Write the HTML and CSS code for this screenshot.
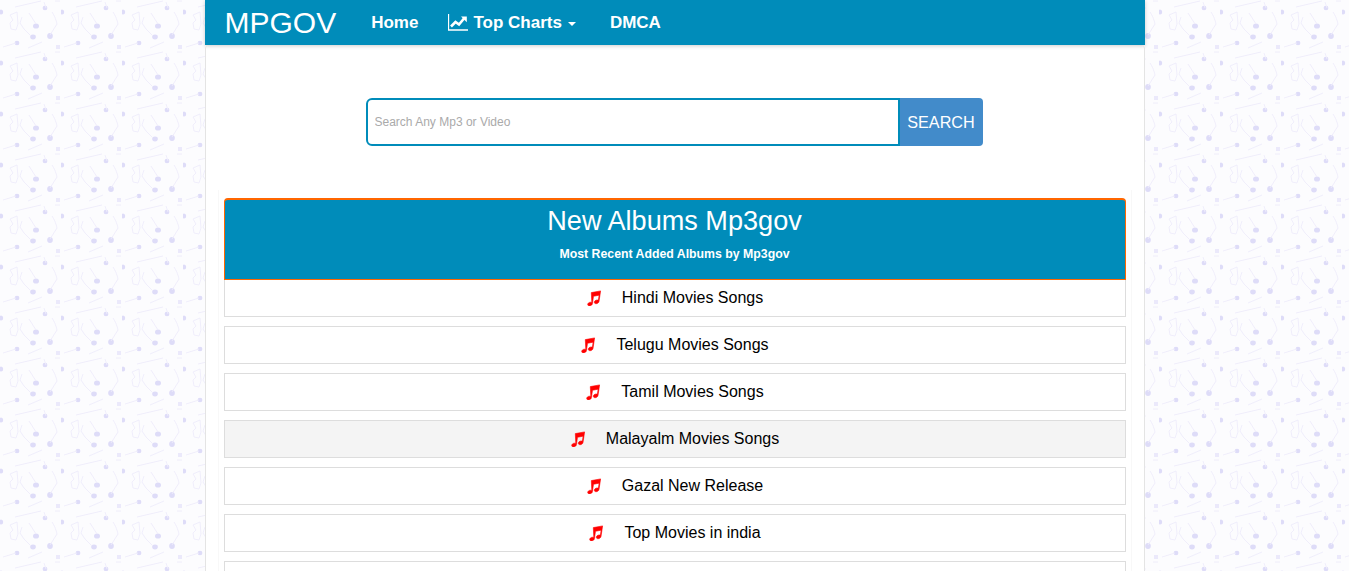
FILE: index.html
```html
<!DOCTYPE html>
<html lang="en">
<head>
    <meta charset="UTF-8">
    <meta name="viewport" content="width=device-width, initial-scale=1.0">
    <title>MPGOV</title>
    <link rel="stylesheet" href="styles.css">
</head>
<body>
    <div class="container">
        <div class="navbar">
            <a class="brand">MPGOV</a>
            <a class="nav-link nav-home">Home</a>
            <a class="nav-link nav-charts">
                <svg class="chart-icon" viewBox="0 0 20 17" width="20" height="17">
                    <path d="M0.5 0v16H20" fill="none" stroke="#fff" stroke-width="1.3"/>
                    <path d="M3 12.5l4.5-4.5 3.5 2.5 5-6" fill="none" stroke="#fff" stroke-width="2.6"/>
                    <path d="M13 2.4h5.8v5.8z" fill="#fff"/>
                </svg>
                Top Charts
                <span class="caret"></span>
            </a>
            <a class="nav-link nav-dmca">DMCA</a>
        </div>

        <div class="content">
            <form class="search-form">
                <input class="search-input" type="text" placeholder="Search Any Mp3 or Video">
                <button class="search-btn" type="button">SEARCH</button>
            </form>

            <div class="section">
                <div class="section-head">
                    <h2>New Albums Mp3gov</h2>
                    <p>Most Recent Added Albums by Mp3gov</p>
                </div>
                <ul class="album-list">
                    <li class="album"><svg class="note"><use href="#music"/></svg>Hindi Movies Songs</li>
                    <li class="album"><svg class="note"><use href="#music"/></svg>Telugu Movies Songs</li>
                    <li class="album"><svg class="note"><use href="#music"/></svg>Tamil Movies Songs</li>
                    <li class="album album-hover"><svg class="note"><use href="#music"/></svg>Malayalm Movies Songs</li>
                    <li class="album"><svg class="note"><use href="#music"/></svg>Gazal New Release</li>
                    <li class="album"><svg class="note"><use href="#music"/></svg>Top Movies in india</li>
                    <li class="album"></li>
                </ul>
            </div>
        </div>
    </div>

    <svg class="defs" width="0" height="0">
        <symbol id="music" viewBox="1 0 14.6 16">
            <path fill="#f00" stroke="#f00" stroke-width="0.6" d="M5.6 2.6L14.9.9l-1.6 10.6c-.2 1.3-1.6 2.2-2.9 2.2-1.1 0-1.9-.6-1.8-1.6.2-1.2 1.5-2.1 2.8-2.1.5 0 1 .1 1.3.3l.7-5.1-5.6 1.1-1.1 7.4c-.2 1.3-1.6 2.2-2.9 2.2-1.1 0-1.9-.6-1.8-1.6.2-1.2 1.5-2.1 2.8-2.1.5 0 1 .1 1.3.3z"/>
        </symbol>
    </svg>
</body>
</html>
```

FILE: styles.css
```css
* {
    margin: 0;
    padding: 0;
    box-sizing: border-box;
}

body {
    font-family: "Liberation Sans", Arial, sans-serif;
    background-color: #fcfcfe;
    background-image: url("data:image/svg+xml,%3Csvg xmlns='http://www.w3.org/2000/svg' width='61' height='51'%3E%3Cdefs%3E%3Cfilter id='b'%3E%3CfeGaussianBlur stdDeviation='0.6'/%3E%3C/filter%3E%3C/defs%3E%3Cg filter='url(%23b)'%3E%3Cg fill='%23dedcf8'%3E%3Cellipse cx='45' cy='8' rx='2.4' ry='2.2'/%3E%3Cellipse cx='1' cy='12' rx='2.2' ry='2.6'/%3E%3Cellipse cx='36' cy='26' rx='3' ry='2.6'/%3E%3Cellipse cx='33' cy='37' rx='2.8' ry='2.4'/%3E%3Cellipse cx='50' cy='36' rx='2.8' ry='3'/%3E%3Cellipse cx='17' cy='43' rx='2.4' ry='2.2'/%3E%3Crect x='56' y='45' width='4' height='4' fill='%23ebe9fb'/%3E%3C/g%3E%3Cg fill='none' stroke='%23eeecfb' stroke-width='0.9'%3E%3Cpath d='M10 15l7-3 1 12-2 6-5-1-1-6 3-3zM22 17l-2 6 4 6 7 7M36 24l-7-11M15 7l26-6M44 2l2 6M55 1h5M57 24l-7 11M52 12c4 6 5 12 5 12M3 47l13-4M28 48l14-6'/%3E%3C/g%3E%3C/g%3E%3C/svg%3E");
}

.container {
    width: 940px;
    min-height: 571px;
    margin: 0 auto;
    background: #fff;
}

.navbar {
    display: flex;
    align-items: center;
    height: 45px;
    background: #008cba;
    box-shadow: 0 1px 4px rgba(0,0,0,0.2);
    color: #fff;
}

.brand {
    font-size: 30px;
    margin-left: 20px;
}

.nav-link {
    display: flex;
    align-items: center;
    font-size: 17px;
    font-weight: bold;
}

.nav-home {
    margin-left: 35px;
}

.nav-charts {
    margin-left: 30px;
}

.chart-icon {
    margin-right: 5px;
}

.caret {
    width: 0;
    height: 0;
    margin-left: 6px;
    margin-top: 2px;
    border-top: 4px solid #fff;
    border-left: 4px solid transparent;
    border-right: 4px solid transparent;
}

.nav-dmca {
    margin-left: 34px;
}

.content {
    height: 526px;
    border-left: 1px solid #e4e4e4;
    border-right: 1px solid #e4e4e4;
    border-top-left-radius: 4px;
    border-top-right-radius: 4px;
    padding: 0 12px;
    overflow: hidden;
}

.search-form {
    display: flex;
    width: 617px;
    height: 48px;
    margin: 53px 0 44px 148px;
}

.search-input {
    flex: 1;
    border: 2px solid #008cba;
    border-radius: 6px 0 0 6px;
    padding: 0 7px;
    font-family: inherit;
    font-size: 12px;
    outline: none;
}

.search-input::placeholder {
    color: #aaa;
}

.search-btn {
    width: 83px;
    border: none;
    border-radius: 0 4px 4px 0;
    background: #428bca;
    color: #fff;
    font-family: inherit;
    font-size: 16.2px;
}

.section {
    padding: 8px 5px 0;
    border-left: 1px solid #f8f8f8;
    border-right: 1px solid #f8f8f8;
}

.section-head {
    height: 82px;
    padding-top: 5px;
    background: #008cba;
    border: 1px solid #ff6600;
    border-top-width: 2px;
    border-radius: 4px 4px 0 0;
    color: #fff;
    text-align: center;
}

.section-head h2 {
    font-size: 27.1px;
    font-weight: normal;
    line-height: 32px;
}

.section-head p {
    margin-top: 9px;
    font-size: 12.3px;
    font-weight: bold;
    line-height: 16px;
}

.album-list {
    list-style: none;
}

.album {
    display: flex;
    align-items: center;
    justify-content: center;
    height: 38px;
    margin-bottom: 9px;
    border: 1px solid #ddd;
    font-size: 16px;
    color: #000;
}

.album:first-child {
    height: 37px;
    border-top: none;
}

.album-hover {
    background: #f4f4f4;
}

.note {
    width: 16px;
    height: 16px;
    margin-right: 20px;
}

.defs {
    position: absolute;
}
```
